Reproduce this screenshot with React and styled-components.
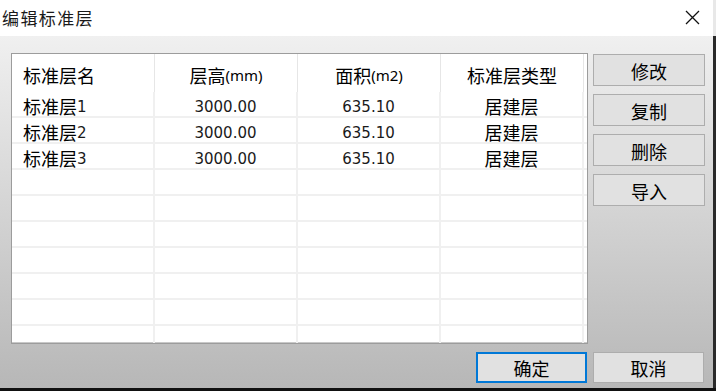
import React from 'react';
import styled, { createGlobalStyle } from 'styled-components';

const GlobalStyle = createGlobalStyle`
  html, body {
    margin: 0;
    padding: 0;
    width: 716px;
    height: 391px;
    overflow: hidden;
    background: #111;
  }
  * {
    box-sizing: border-box;
  }
`;

const CJK = `"Noto Sans", "Noto Sans CJK SC", sans-serif`;
const NUM = `"DejaVu Sans", "Noto Sans CJK SC", sans-serif`;

const rows = [
  { name: '标准层', idx: '1', height: '3000.00', area: '635.10', type: '居建层' },
  { name: '标准层', idx: '2', height: '3000.00', area: '635.10', type: '居建层' },
  { name: '标准层', idx: '3', height: '3000.00', area: '635.10', type: '居建层' },
];
const EMPTY_ROWS = 7;

function CloseIcon() {
  return (
    <svg width="15" height="15" viewBox="0 0 15 15">
      <path d="M1 1 L14 14 M14 1 L1 14" stroke="#111" strokeWidth="1.3" fill="none" />
    </svg>
  );
}

function App() {
  return (
    <>
      <GlobalStyle />
      <Window>
        <TitleBar>
          <Title>编辑标准层</Title>
          <CloseButton>
            <CloseIcon />
          </CloseButton>
        </TitleBar>
        <Body>
          <Main>
            <Table>
              <HeaderRow>
                <HeadCell $left>标准层名</HeadCell>
                <HeadCell>
                  层高<Unit>(mm)</Unit>
                </HeadCell>
                <HeadCell>
                  面积<Unit>(m2)</Unit>
                </HeadCell>
                <HeadCell>标准层类型</HeadCell>
              </HeaderRow>
              {rows.map((r, i) => (
                <Row key={i}>
                  <Cell $left>
                    {r.name}
                    <Num>{r.idx}</Num>
                  </Cell>
                  <Cell>
                    <Num>{r.height}</Num>
                  </Cell>
                  <Cell>
                    <Num>{r.area}</Num>
                  </Cell>
                  <Cell>{r.type}</Cell>
                </Row>
              ))}
              {Array.from({ length: EMPTY_ROWS }).map((_, i) => (
                <Row key={'e' + i}>
                  <Cell $left />
                  <Cell />
                  <Cell />
                  <Cell />
                </Row>
              ))}
            </Table>
            <SideButtons>
              <Button>修改</Button>
              <Button>复制</Button>
              <Button>删除</Button>
              <Button>导入</Button>
            </SideButtons>
          </Main>
          <Footer>
            <Button $primary $w={111} $h={31}>
              确定
            </Button>
            <Button $w={111} $h={31}>
              取消
            </Button>
          </Footer>
        </Body>
      </Window>
    </>
  );
}

export default App;

const Window = styled.div`
  width: 716px;
  height: 388px;
  display: flex;
  flex-direction: column;
  font-family: ${CJK};
  color: #000;
`;

const TitleBar = styled.div`
  height: 36px;
  background: #fff;
  border-right: 3px solid #e8e8e8;
  display: flex;
  align-items: center;
  justify-content: space-between;
  padding-left: 2px;
  padding-right: 13px;
`;

const Title = styled.div`
  font-size: 17px;
  letter-spacing: 1.4px;
  color: #1a1a1a;
  padding-bottom: 1px;
`;

const CloseButton = styled.div`
  display: flex;
  align-items: center;
  justify-content: center;
  width: 15px;
  height: 15px;
  margin-bottom: 1px;
`;

const Body = styled.div`
  flex: 1;
  display: flex;
  flex-direction: column;
  background: linear-gradient(to bottom, #f0f0f0 0%, #b7b7b7 100%);
  border-right: 3px solid #2a2a2a;
  padding: 17px 8px 5px 11px;
`;

const Main = styled.div`
  display: flex;
  gap: 5px;
  height: 291px;
`;

const Table = styled.div`
  width: 577px;
  height: 291px;
  background: #fff;
  border: 1px solid #9c9c9c;
  box-shadow: inset 0 -1px 0 #c8c8c8;
  overflow: hidden;
`;

const HeaderRow = styled.div`
  display: grid;
  grid-template-columns: repeat(4, 143px);
  height: 38px;
`;

const HeadCell = styled.div`
  display: flex;
  align-items: center;
  justify-content: ${(p) => (p.$left ? 'flex-start' : 'center')};
  padding-left: ${(p) => (p.$left ? '11px' : '0')};
  padding-top: 4px;
  font-size: 18px;
  border-right: 1px solid #e6e6e6;
  white-space: nowrap;
`;

const Unit = styled.span`
  font-family: ${CJK};
  font-size: 15px;
  vertical-align: -1px;
`;

const Row = styled.div`
  display: grid;
  grid-template-columns: repeat(4, 143px);
  height: 26px;
  border-bottom: 2px solid #f0f0f0;
`;

const Cell = styled.div`
  display: flex;
  align-items: center;
  justify-content: ${(p) => (p.$left ? 'flex-start' : 'center')};
  padding-left: ${(p) => (p.$left ? '11px' : '0')};
  padding-top: 6px;
  font-size: 18px;
  line-height: 1;
  border-right: 2px solid #f0f0f0;
  white-space: nowrap;
`;

const Num = styled.span`
  font-family: ${NUM};
  font-size: 15px;
  color: #1a1a1a;
  vertical-align: -1px;
`;

const SideButtons = styled.div`
  display: flex;
  flex-direction: column;
  gap: 8px;
  padding-top: 1px;
`;

const Button = styled.div`
  width: ${(p) => (p.$w ? p.$w + 'px' : '112px')};
  height: ${(p) => (p.$h ? p.$h + 'px' : '32px')};
  display: flex;
  align-items: center;
  justify-content: center;
  background: #e1e1e1;
  border: ${(p) => (p.$primary ? '2px solid #0078d7' : '1px solid #adadad')};
  font-size: 18px;
  color: #000;
  padding-top: 1px;
`;

const Footer = styled.div`
  display: flex;
  justify-content: flex-end;
  gap: 6px;
  margin-top: 8px;
  padding-right: 1px;
`;
